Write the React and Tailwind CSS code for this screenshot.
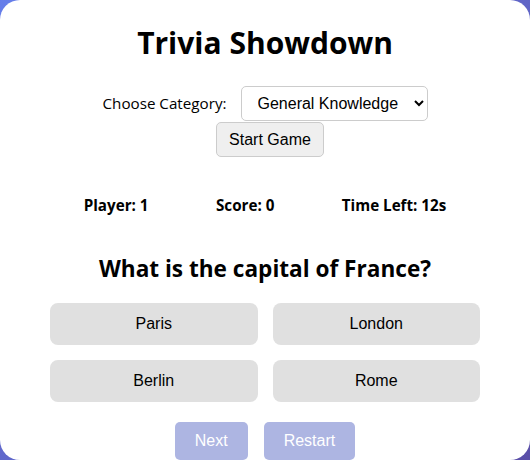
import React, { useState } from "react";

const answers = ["Paris", "London", "Berlin", "Rome"];

export default function App() {
  const [category, setCategory] = useState("general");

  return (
    <div className="h-[460px] w-full overflow-hidden bg-[linear-gradient(135deg,#667eea,#5a4fa8)]">
      <div className="h-[460px] w-full rounded-[20px] bg-white px-[50px] pt-[24px] text-center text-black font-['Open_Sans',sans-serif]">
        <h1 className="text-[30px] font-bold leading-[38px]">Trivia Showdown</h1>

        <div className="mt-[24px] flex items-center justify-center gap-[14px]">
          <label className="text-[15.2px]">Choose Category:</label>
          <select
            value={category}
            onChange={(e) => setCategory(e.target.value)}
            className="h-[35px] w-[187px] rounded-[5px] border border-[#ccc] bg-white pl-[12px] pr-[6px] text-[16px] font-['Liberation_Sans',Arial,sans-serif]"
          >
            <option value="general">General Knowledge</option>
            <option value="science">Science</option>
            <option value="history">History</option>
          </select>
        </div>
        <button className="ml-[10px] mt-px h-[35px] rounded-[5px] border border-[#ccc] bg-[#efefef] px-[12px] text-[16px] font-['Liberation_Sans',Arial,sans-serif]">
          Start Game
        </button>

        <div className="mt-[37px] flex justify-around text-[15.2px] font-bold">
          <span>Player: 1</span>
          <span>Score: 0</span>
          <span>Time Left: 12s</span>
        </div>

        <h2 className="mt-[37px] text-[22.6px] font-bold leading-[30px]">What is the capital of France?</h2>

        <div className="mt-[19px] grid grid-cols-2 gap-[15px]">
          {answers.map((a) => (
            <button
              key={a}
              className="h-[42px] rounded-[8px] bg-[#e0e0e0] text-[16px] font-['Liberation_Sans',Arial,sans-serif]"
            >
              {a}
            </button>
          ))}
        </div>

        <div className="mt-[20px] flex justify-center gap-[16px] font-['Liberation_Sans',Arial,sans-serif]">
          <button disabled className="h-[38px] rounded-[5px] bg-[#adb5e2] px-[20px] text-[16px] text-white">
            Next
          </button>
          <button disabled className="h-[38px] rounded-[5px] bg-[#adb5e2] px-[20px] text-[16px] text-white">
            Restart
          </button>
        </div>
      </div>
    </div>
  );
}
